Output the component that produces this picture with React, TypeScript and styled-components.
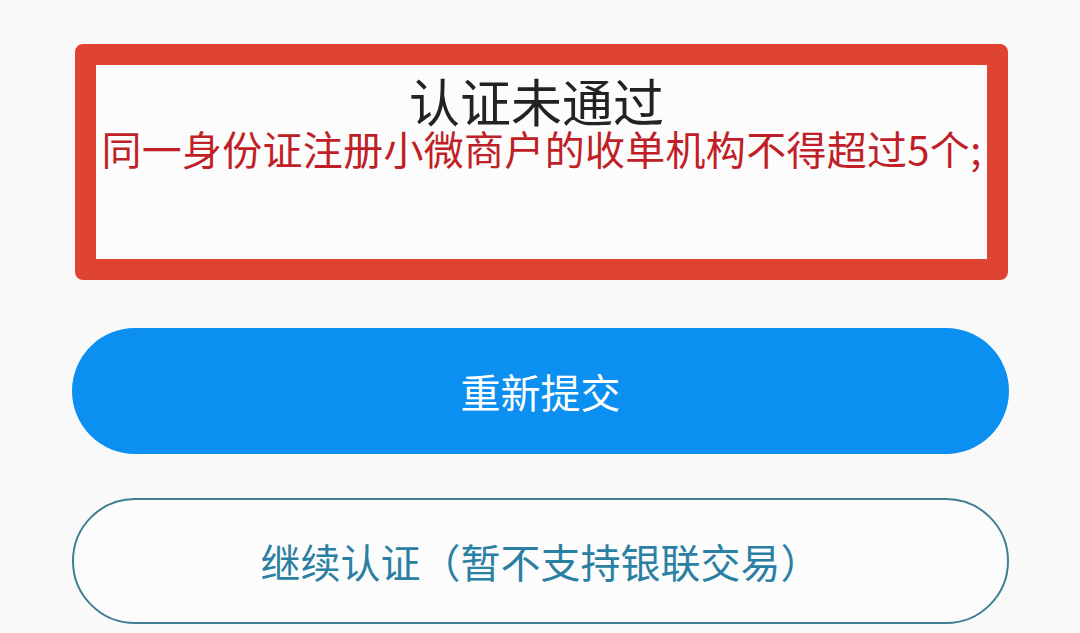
import React from "react";
import styled, { createGlobalStyle } from "styled-components";

const GlobalStyle = createGlobalStyle`
  html, body {
    margin: 0;
    padding: 0;
    background: #f9f9f9;
  }
  body {
    font-family: "Noto Sans CJK SC", "Noto Sans", sans-serif;
  }
`;

const Page = styled.div`
  width: 1080px;
  height: 633px;
  box-sizing: border-box;
  padding: 44px 71px 0 72px;
  display: flex;
  flex-direction: column;
  background: #f9f9f9;
  overflow: hidden;
`;

const ResultBox = styled.div`
  margin: 0 1px 0 3px;
  height: 236px;
  box-sizing: border-box;
  border: 21px solid #df4433;
  border-radius: 8px;
  background: #fcfcfc;
  display: flex;
  flex-direction: column;
  align-items: center;
  padding-top: 7px;
`;

const Title = styled.div`
  margin-right: 10px;
  font-size: 51px;
  line-height: 1.1;
  color: #222;
`;

const Reason = styled.div`
  font-size: 40px;
  line-height: 1;
  letter-spacing: 0.3px;
  color: #c01f27;
  white-space: nowrap;
`;

const Button = styled.button<{ $outline?: boolean }>`
  height: 126px;
  width: 100%;
  box-sizing: border-box;
  border-radius: 63px;
  font-family: "Noto Sans CJK SC", "Noto Sans", sans-serif;
  font-size: 40px;
  display: flex;
  align-items: center;
  justify-content: center;
  cursor: pointer;
  padding: 0;
  border: ${({ $outline }) => ($outline ? "2px solid #3f7f93" : "none")};
  background: ${({ $outline }) => ($outline ? "#fcfcfc" : "#0b8ff0")};
  color: ${({ $outline }) => ($outline ? "#2a80a3" : "#ffffff")};
`;

const PrimaryButton = styled(Button)`
  margin-top: 48px;
`;

const SecondaryButton = styled(Button)`
  margin-top: 44px;
`;

export default function App() {
  return (
    <>
      <GlobalStyle />
      <Page>
        <ResultBox>
          <Title>认证未通过</Title>
          <Reason>同一身份证注册小微商户的收单机构不得超过5个;</Reason>
        </ResultBox>
        <PrimaryButton>重新提交</PrimaryButton>
        <SecondaryButton $outline>继续认证（暂不支持银联交易）</SecondaryButton>
      </Page>
    </>
  );
}
